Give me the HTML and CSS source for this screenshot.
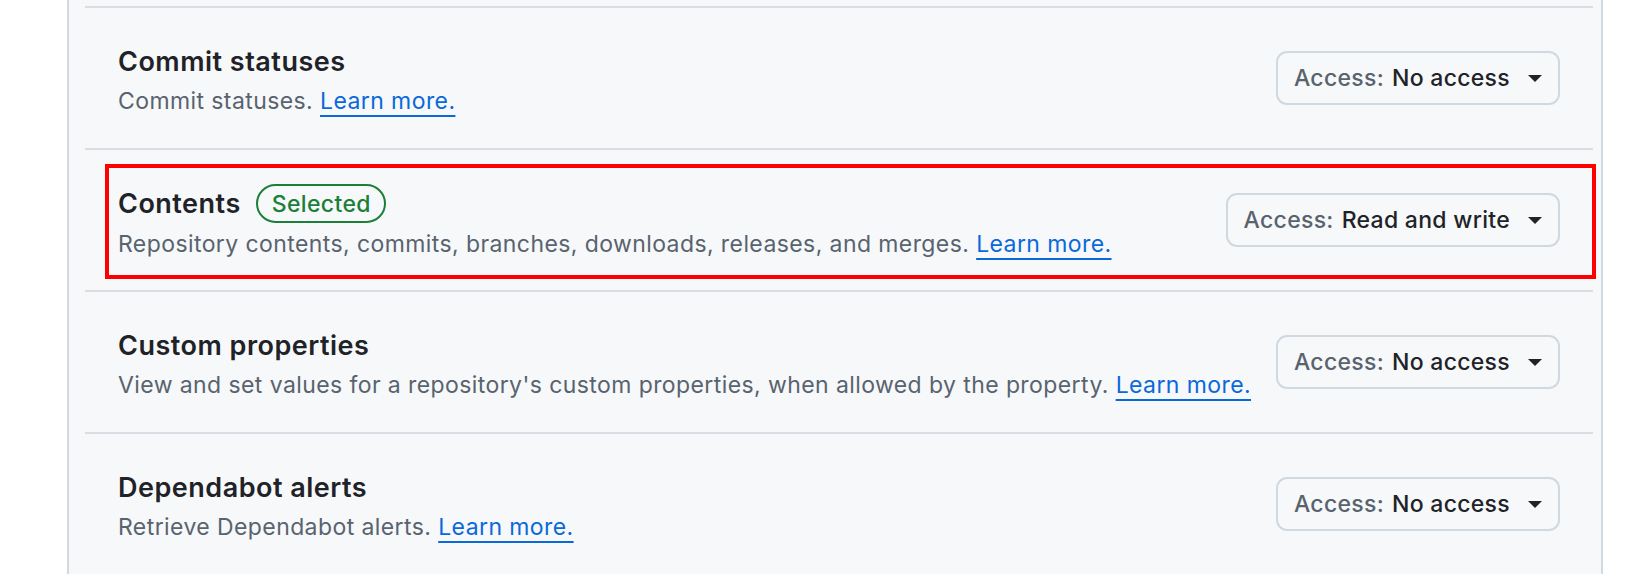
FILE: index.html
```html
<!DOCTYPE html>
<html lang="en">
<head>
<meta charset="utf-8">
<title>Repository permissions</title>
<link rel="stylesheet" href="styles.css">
</head>
<body>
<div class="panel">
  <ul class="perm-list">
    <li class="perm-row">
      <div class="perm-info">
        <div class="perm-title">Commit statuses</div>
        <div class="perm-desc">Commit statuses. <a class="learn" href="#">Learn more.</a></div>
      </div>
      <button class="access-btn" type="button"><span class="lbl">Access:</span><span class="val">No access</span><span class="caret"></span></button>
    </li>
    <li class="perm-row is-highlighted">
      <div class="perm-info">
        <div class="perm-title">Contents <span class="pill">Selected</span></div>
        <div class="perm-desc">Repository contents, commits, branches, downloads, releases, and merges. <a class="learn" href="#">Learn more.</a></div>
      </div>
      <button class="access-btn" type="button"><span class="lbl">Access:</span><span class="val">Read and write</span><span class="caret"></span></button>
      <span class="annotation"></span>
    </li>
    <li class="perm-row">
      <div class="perm-info">
        <div class="perm-title">Custom properties</div>
        <div class="perm-desc">View and set values for a repository's custom properties, when allowed by the property. <a class="learn" href="#">Learn more.</a></div>
      </div>
      <button class="access-btn" type="button"><span class="lbl">Access:</span><span class="val">No access</span><span class="caret"></span></button>
    </li>
    <li class="perm-row">
      <div class="perm-info">
        <div class="perm-title">Dependabot alerts</div>
        <div class="perm-desc">Retrieve Dependabot alerts. <a class="learn" href="#">Learn more.</a></div>
      </div>
      <button class="access-btn" type="button"><span class="lbl">Access:</span><span class="val">No access</span><span class="caret"></span></button>
    </li>
  </ul>
</div>
</body>
</html>
```

FILE: styles.css
```css
html, body {
  margin: 0;
  padding: 0;
  background: #ffffff;
  height: 100%;
  overflow: hidden;
}

body {
  font-family: Inter, "Noto Sans", "Liberation Sans", sans-serif;
  color: #1f2328;
}

.panel {
  margin-left: 67px;
  width: 1536px;
  height: 574px;
  box-sizing: border-box;
  border-left: 2px solid #d1d9e0;
  border-right: 2px solid #d1d9e0;
  background: #f6f8fa;
}

.perm-list {
  list-style: none;
  margin: 0;
  padding: 6px 8px 0 16px;
}

.perm-row {
  position: relative;
  box-sizing: border-box;
  height: 142px;
  border-top: 2px solid #d8dee4;
  padding: 0 33px;
  display: flex;
  align-items: center;
  justify-content: space-between;
}

.perm-info {
  display: flex;
  flex-direction: column;
  padding-top: 6px;
}

.perm-title {
  display: flex;
  align-items: center;
  gap: 15px;
  font-size: 27px;
  letter-spacing: 0.5px;
  line-height: 36px;
  font-weight: 600;
  color: #1f2328;
}

.pill {
  display: inline-flex;
  align-items: center;
  height: 39px;
  box-sizing: border-box;
  padding: 0 13px 0 14px;
  border: 2px solid #1a7f37;
  border-radius: 20px;
  color: #1a7f37;
  font-size: 23px;
  letter-spacing: 0.35px;
  font-weight: 500;
}

.perm-desc {
  margin-top: 3px;
  font-size: 23px;
  letter-spacing: 0.41px;
  line-height: 36px;
  color: #59636e;
}

.learn {
  color: #0969da;
  text-decoration: underline;
  text-decoration-thickness: 2px;
  text-underline-offset: 6px;
}

.access-btn {
  display: inline-flex;
  align-items: center;
  height: 54px;
  box-sizing: border-box;
  padding: 0 16px 0 16px;
  border: 2px solid #d1d9e0;
  border-radius: 11px;
  background: #f6f8fa;
  font-family: inherit;
  font-size: 23px;
  letter-spacing: 0.3px;
  font-weight: 500;
  color: #1f2328;
}

.access-btn .lbl {
  color: #59636e;
  margin-right: 8px;
}

.access-btn .caret {
  margin-left: 18px;
  width: 0;
  height: 0;
  border-left: 7px solid transparent;
  border-right: 7px solid transparent;
  border-top: 7px solid #1f2328;
}

.annotation {
  position: absolute;
  left: 20px;
  right: -3px;
  top: 14px;
  bottom: 11px;
  border: 4px solid #ff0000;
  pointer-events: none;
}
```
